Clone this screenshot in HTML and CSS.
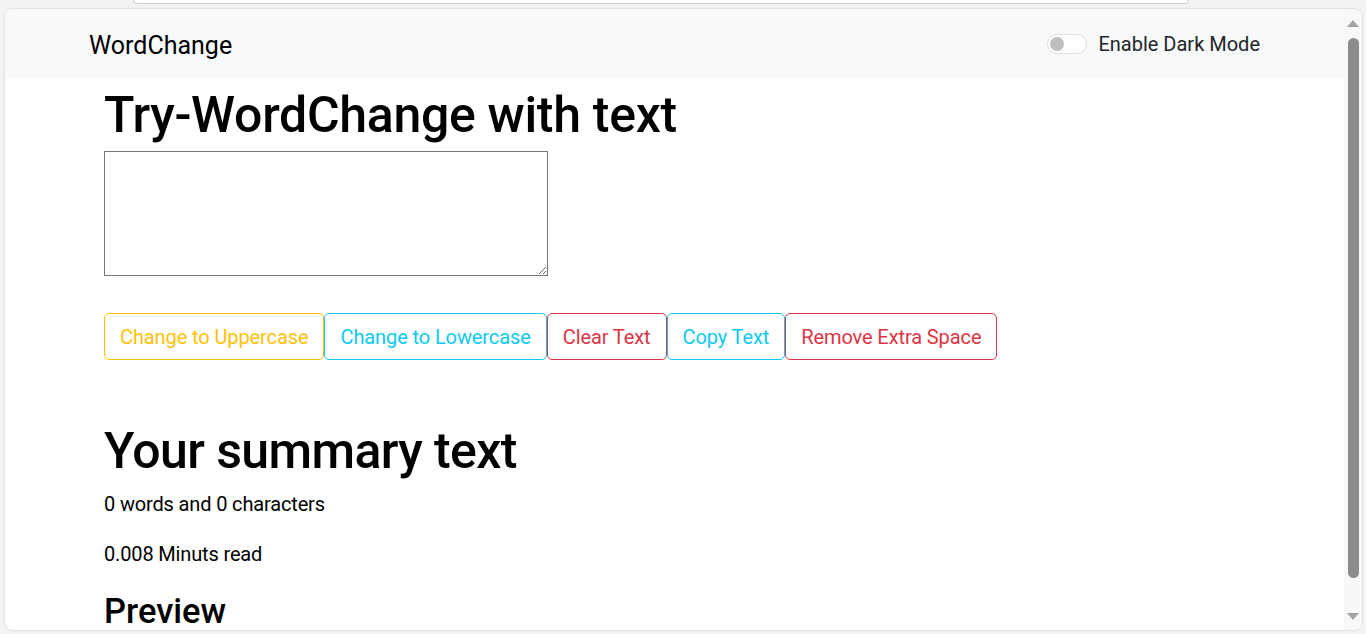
FILE: index.html
```html
<!DOCTYPE html>
<html lang="en">
<head>
<meta charset="utf-8">
<title>WordChange</title>
<link rel="stylesheet" href="styles.css">
</head>
<body>
<div class="chrome-top"></div>
<div class="frame">
  <div class="viewport">
    <nav class="navbar">
      <span class="brand">WordChange</span>
      <label class="switch">
        <span class="switch-track"><span class="switch-knob"></span></span>
        <span class="switch-label">Enable Dark Mode</span>
      </label>
    </nav>
    <main class="content">
      <h1 class="title">Try-WordChange with text</h1>
      <div class="editor"><textarea class="box" aria-label="text"></textarea></div>
      <div class="actions">
        <button class="btn btn-warning">Change to Uppercase</button>
        <button class="btn btn-info">Change to Lowercase</button>
        <button class="btn btn-danger">Clear Text</button>
        <button class="btn btn-info">Copy Text</button>
        <button class="btn btn-danger">Remove Extra Space</button>
      </div>
      <h1 class="title summary">Your summary text</h1>
      <p class="stat">0 words and 0 characters</p>
      <p class="stat">0.008 Minuts read</p>
      <h2 class="sub">Preview</h2>
    </main>
  </div>
  <div class="scrollbar">
    <span class="arrow arrow-up"></span>
    <span class="thumb"></span>
    <span class="arrow arrow-down"></span>
  </div>
</div>
</body>
</html>
```

FILE: styles.css
```css
* { box-sizing: border-box; }

body {
  margin: 0;
  height: 634px;
  overflow: hidden;
  background: #f3f3f3;
  font-family: Roboto, "Open Sans", sans-serif;
  display: flex;
  flex-direction: column;
}

.chrome-top {
  height: 4px;
  width: 1056px;
  margin-left: 133px;
  background: #ffffff;
  border: 1px solid #d2d2d2;
  border-top: 0;
  border-radius: 0 0 10px 10px;
}

.frame {
  margin: 4px 3px 0 4px;
  height: 623px;
  border: 1px solid #e2e2e2;
  border-radius: 9px;
  overflow: hidden;
  display: flex;
  background: #ffffff;
  box-shadow: 0 0 2px rgba(0, 0, 0, 0.06);
}

.viewport {
  flex: 1;
  overflow: hidden;
  background: #ffffff;
}

.navbar {
  height: 70px;
  background: #f8f9fa;
  display: flex;
  align-items: center;
  justify-content: space-between;
  padding: 0 84px;
}

.brand {
  font-size: 25px;
  color: #000;
  line-height: 1.5;
  padding-top: 3px;
}

.switch {
  display: flex;
  align-items: center;
}

.switch-track {
  width: 40px;
  height: 20px;
  border: 1px solid #dcdfe3;
  border-radius: 10px;
  background: #ffffff;
  display: flex;
  align-items: center;
  padding-left: 2px;
}

.switch-knob {
  width: 14px;
  height: 14px;
  border-radius: 50%;
  background: #bfbfbf;
}

.switch-label {
  margin-left: 11px;
  font-size: 20px;
  color: #212529;
  line-height: 1.5;
}

.content {
  padding: 6px 0 0 99px;
  color: #000;
}

.title {
  margin: 0 0 6px;
  font-size: 50px;
  font-weight: 500;
  line-height: 1.2;
  letter-spacing: -0.3px;
}

.box {
  display: block;
  width: 444px;
  height: 125px;
  border: 1px solid #767676;
  border-radius: 0;
  margin: 0;
}

.actions {
  display: flex;
  margin-top: 37px;
}

.btn {
  font-family: inherit;
  font-size: 20px;
  line-height: 1.5;
  letter-spacing: -0.1px;
  padding: 7.5px 15px;
  background: transparent;
  border: 1px solid;
  border-radius: 5px;
  margin: 0;
}

.btn-warning { color: #ffc107; border-color: #ffc107; }
.btn-info { color: #0dcaf0; border-color: #0dcaf0; }
.btn-danger { color: #dc3545; border-color: #dc3545; }

.summary {
  margin-top: 61px;
  margin-bottom: 8px;
  letter-spacing: -0.6px;
}

.stat {
  margin: 0 0 20px;
  font-size: 20px;
  line-height: 1.5;
  letter-spacing: -0.15px;
}

.sub {
  margin: 0;
  font-size: 34.5px;
  font-weight: 500;
  line-height: 1.2;
  padding-top: 2px;
}

.scrollbar {
  width: 18px;
  background: #f8f8f8;
  display: flex;
  flex-direction: column;
  align-items: center;
  padding: 11px 0 10px;
}

.arrow {
  width: 0;
  height: 0;
  border-left: 6.5px solid transparent;
  border-right: 6.5px solid transparent;
}

.arrow-up { border-bottom: 7px solid #a3a3a3; }

.arrow-down {
  border-top: 7px solid #a3a3a3;
  margin-top: auto;
}

.thumb {
  margin-top: 11px;
  width: 11px;
  height: 540px;
  border-radius: 6px;
  background: #8b8b8b;
}
```
